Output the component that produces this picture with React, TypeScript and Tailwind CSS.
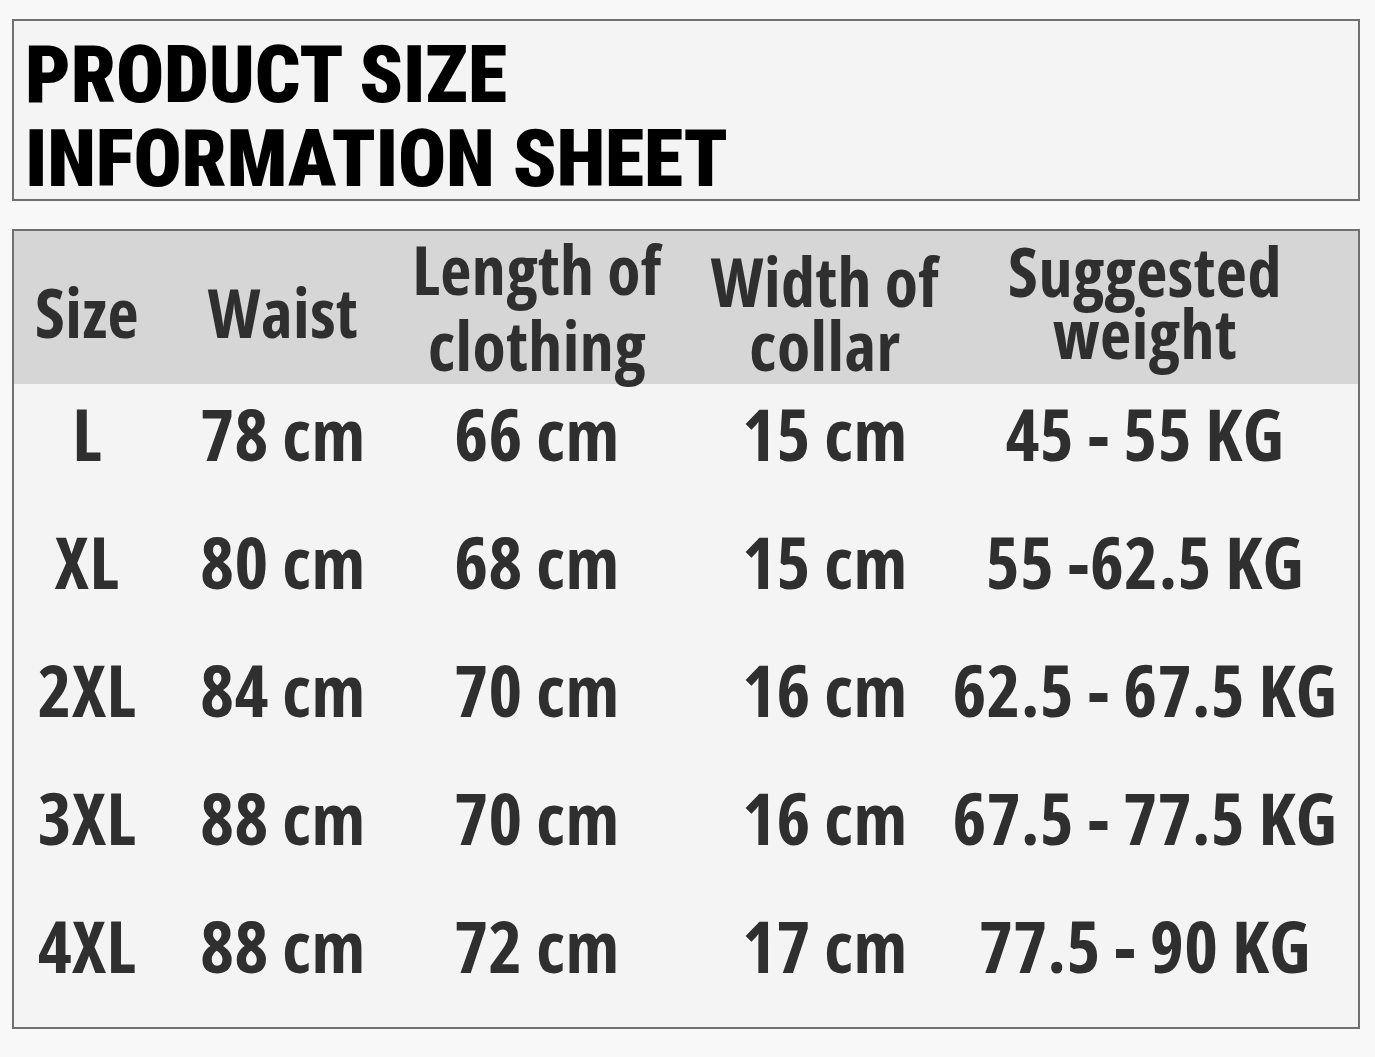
const rows = [
  ["L", "78 cm", "66 cm", "15 cm", "45 - 55 KG"],
  ["XL", "80 cm", "68 cm", "15 cm", "55 -62.5 KG"],
  ["2XL", "84 cm", "70 cm", "16 cm", "62.5 - 67.5 KG"],
  ["3XL", "88 cm", "70 cm", "16 cm", "67.5 - 77.5 KG"],
  ["4XL", "88 cm", "72 cm", "17 cm", "77.5 - 90 KG"],
];

const cols = "grid grid-cols-[146px_246px_262px_314px_326px]";

export default function App() {
  return (
    <div className="w-[1375px] h-[1057px] bg-[#f8f8f8] pt-[19px] pl-[12px] pr-[15px] overflow-hidden">
      <div className="h-[182px] border-2 border-[#707070] bg-[#f4f4f4] pl-[11px] pt-[12px]">
        <h1 className="font-['Roboto',sans-serif] font-black [font-stretch:75%] text-[80px] leading-[84px] text-black tracking-[-0.2px]">
          PRODUCT SIZE
          <br />
          INFORMATION SHEET
        </h1>
      </div>

      <div className="mt-[28px] h-[800px] border-2 border-[#707070] bg-[#f4f4f4] font-['Open_Sans',sans-serif] font-bold [font-stretch:87.5%] text-[#2f2f2f]">
        <div className={`${cols} h-[153px] bg-[#d6d6d6] text-[68px] text-center whitespace-nowrap tracking-[0.5px]`}>
          <div className="pt-[47px] leading-none">Size</div>
          <div className="pt-[47px] leading-none">Waist</div>
          <div className="pt-0 leading-[76px]">
            Length of
            <br />
            clothing
          </div>
          <div className="pt-[18px] leading-[64px]">
            Width of
            <br />
            collar
          </div>
          <div className="pt-[9px] leading-[62px]">
            Suggested
            <br />
            weight
          </div>
        </div>
        {rows.map((r) => (
          <div key={r[0]} className={`${cols} h-[128px] text-[72px] leading-none tracking-[0.5px]`}>
            {r.map((c, i) => (
              <div key={i} className="flex justify-center pt-[13px] whitespace-nowrap">
                <span>{c}</span>
              </div>
            ))}
          </div>
        ))}
      </div>
    </div>
  );
}
